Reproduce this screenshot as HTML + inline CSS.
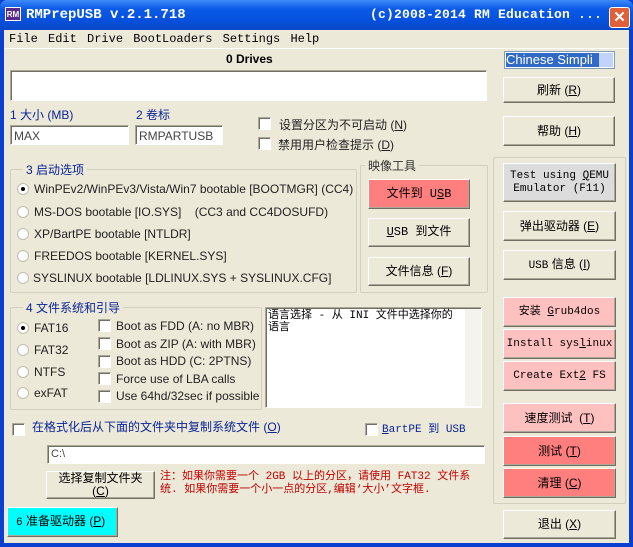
<!DOCTYPE html>
<html><head><meta charset="utf-8"><style>
*{box-sizing:border-box;margin:0;padding:0}
body{width:633px;height:547px;overflow:hidden;background:#0a3fd0;font-family:"Liberation Sans","Noto Sans CJK SC",sans-serif;font-size:11px;color:#000;position:relative}
.a{position:absolute}
#title{left:0;top:0;width:633px;height:30px;background:linear-gradient(#3d8af7,#0a5ae8 30%,#0550dc 70%,#0a48c8);border-radius:7px 7px 0 0}
#client{left:4px;top:30px;width:625px;height:513px;background:#ece9d8}
.tt{color:#fff;font-family:"Liberation Mono","Noto Sans CJK SC",monospace;font-weight:bold;font-size:14px;top:7px;white-space:nowrap}
.btn{position:absolute;background:#ece9d8;border:1px solid;border-color:#fff #716f64 #716f64 #fff;box-shadow:inset -1px -1px 0 #aca899;display:flex;align-items:center;justify-content:center;text-align:center;font-size:12px;font-family:"Liberation Sans","Noto Sans CJK SC",sans-serif;line-height:13px}
.btn>span{display:block;white-space:nowrap}
.mono{font-family:"Liberation Mono","Noto Sans CJK SC",monospace;font-size:11px}
.inp{position:absolute;background:#fff;border:1px solid;border-color:#aca899 #fff #fff #aca899;box-shadow:inset 1px 1px 0 #716f64;font-size:12px;color:#444;padding:3px 3px}
.grp{position:absolute;border:1px solid #d0d0bf;border-radius:2px}
.lg{position:absolute;background:#ece9d8;color:#0a2496;font-size:12px;padding:0 3px;top:-9px}
.cb{position:absolute;width:13px;height:13px;background:#fff;border:1px solid;border-color:#aca899 #fff #fff #aca899;box-shadow:inset 1px 1px 0 #716f64}
.rd{position:absolute;width:12px;height:12px;border-radius:50%;background:#fff;border:1px solid #c0bdb0}
.rd.on::after{content:"";position:absolute;left:3px;top:3px;width:4px;height:4px;border-radius:50%;background:#000}
.t{position:absolute;font-size:12px;white-space:nowrap;color:#222}
</style></head><body>
<div id="title" class="a"></div>
<div class="a" style="left:5px;top:7px;width:16px;height:14px;background:#5a2a8a;color:#fff;font-size:8px;font-weight:bold;text-align:center;line-height:14px;border:1px solid #fff">RM</div>
<div class="a tt" style="left:26px">RMPrepUSB v.2.1.718</div>
<div class="a tt" style="left:370px;font-size:13px;letter-spacing:0.2px">(c)2008-2014 RM Education ...</div>
<div class="a" style="left:609px;top:7px;width:21px;height:21px;background:#e0603a;border:1px solid #fff;border-radius:3px;color:#fff;font-size:15px;font-weight:bold;text-align:center;line-height:19px">✕</div>
<div id="client" class="a"></div>
<div class="a mono" style="left:9px;top:32px;font-size:12px;word-spacing:3px;white-space:nowrap">File Edit Drive BootLoaders Settings Help</div>
<div class="a" style="left:4px;top:48px;width:625px;border-top:1px solid #fff"></div>
<div class="a" style="left:226px;top:52px;font-weight:bold;font-size:12px">0 Drives</div>
<div class="inp" style="left:10px;top:70px;width:477px;height:31px"></div>
<div class="a" style="left:504px;top:51px;width:111px;height:18px;background:#fff;border:1px solid #7f9db9"><div style="position:absolute;left:1px;top:1px;width:93px;height:14px;background:#316ac5;color:#fff;font-size:13px;line-height:14px;overflow:hidden;white-space:nowrap">Chinese Simpli</div><div style="position:absolute;right:1px;top:1px;width:14px;height:14px;background:#c1d3fb"></div></div>
<div class="btn" style="left:503px;top:77px;width:112px;height:26px"><span>刷新 (<u>R</u>)</span></div>
<div class="btn" style="left:503px;top:116px;width:112px;height:30px"><span>帮助 (<u>H</u>)</span></div>
<div class="a" style="left:10px;top:106px;color:#0a2496;font-size:12px">1 大小 (MB)</div>
<div class="a" style="left:136px;top:106px;color:#0a2496;font-size:12px">2 卷标</div>
<div class="inp" style="left:10px;top:125px;width:119px;height:20px">MAX</div>
<div class="inp" style="left:135px;top:125px;width:88px;height:20px">RMPARTUSB</div>
<div class="cb" style="left:258px;top:117px"></div><div class="t" style="left:279px;top:116px">设置分区为不可启动 (<u>N</u>)</div>
<div class="cb" style="left:258px;top:137px"></div><div class="t" style="left:278px;top:136px">禁用用户检查提示 (<u>D</u>)</div>

<div class="grp" style="left:10px;top:169px;width:347px;height:124px"><div class="lg" style="left:12px">3 启动选项</div></div>
<div class="rd on" style="left:17px;top:183px"></div><div class="t" style="left:34px;top:182px">WinPEv2/WinPEv3/Vista/Win7 bootable [BOOTMGR] (CC4)</div>
<div class="rd" style="left:17px;top:206px"></div><div class="t" style="left:34px;top:205px">MS-DOS bootable [IO.SYS]&nbsp;&nbsp;&nbsp; (CC3 and CC4DOSUFD)</div>
<div class="rd" style="left:17px;top:228px"></div><div class="t" style="left:34px;top:227px">XP/BartPE bootable [NTLDR]</div>
<div class="rd" style="left:17px;top:250px"></div><div class="t" style="left:34px;top:249px">FREEDOS bootable [KERNEL.SYS]</div>
<div class="rd" style="left:17px;top:272px"></div><div class="t" style="left:33px;top:271px">SYSLINUX bootable [LDLINUX.SYS + SYSLINUX.CFG]</div>

<div class="grp" style="left:360px;top:165px;width:128px;height:128px"><div class="lg" style="left:4px;color:#333">映像工具</div></div>
<div class="btn mono" style="left:368px;top:179px;width:102px;height:30px;background:#ff7f7f;font-size:12px"><span>文件到 U<u>S</u>B</span></div>
<div class="btn mono" style="left:368px;top:218px;width:102px;height:29px;font-size:12px"><span><u>U</u>SB 到文件</span></div>
<div class="btn" style="left:368px;top:257px;width:102px;height:29px"><span>文件信息 (<u>F</u>)</span></div>

<div class="grp" style="left:493px;top:157px;width:133px;height:347px"></div>
<div class="btn mono" style="left:503px;top:163px;width:113px;height:39px;background:#dcdcdc"><span>Test using <u>Q</u>EMU<br>Emulator (F11)</span></div>
<div class="btn" style="left:503px;top:211px;width:113px;height:30px"><span>弹出驱动器 (<u>E</u>)</span></div>
<div class="btn" style="left:503px;top:250px;width:113px;height:30px"><span><span class="mono">USB</span> 信息 (<u>I</u>)</span></div>
<div class="btn mono" style="left:503px;top:297px;width:113px;height:30px;background:#ffc0c0"><span>安装 <u>G</u>rub4dos</span></div>
<div class="btn mono" style="left:503px;top:329px;width:113px;height:30px;background:#ffc0c0"><span>Install sys<u>l</u>inux</span></div>
<div class="btn mono" style="left:503px;top:361px;width:113px;height:30px;background:#ffc0c0"><span>Create Ext<u>2</u> FS</span></div>
<div class="btn" style="left:503px;top:403px;width:113px;height:30px;background:#ffc0c0"><span>速度测试 &nbsp;(<u>T</u>)</span></div>
<div class="btn" style="left:503px;top:436px;width:113px;height:30px;background:#ff7f7f"><span>测试 (<u>T</u>)</span></div>
<div class="btn" style="left:503px;top:468px;width:113px;height:30px;background:#ff7f7f"><span>清理 (<u>C</u>)</span></div>
<div class="btn" style="left:503px;top:510px;width:113px;height:29px"><span>退出 (<u>X</u>)</span></div>

<div class="grp" style="left:10px;top:307px;width:252px;height:103px"><div class="lg" style="left:12px">4 文件系统和引导</div></div>
<div class="rd on" style="left:17px;top:322px"></div><div class="t" style="left:34px;top:321px">FAT16</div>
<div class="rd" style="left:17px;top:344px"></div><div class="t" style="left:34px;top:343px">FAT32</div>
<div class="rd" style="left:17px;top:366px"></div><div class="t" style="left:34px;top:365px">NTFS</div>
<div class="rd" style="left:17px;top:387px"></div><div class="t" style="left:34px;top:386px">exFAT</div>
<div class="cb" style="left:98px;top:319px"></div><div class="t" style="left:116px;top:319px">Boot as FDD (A: no MBR)</div>
<div class="cb" style="left:98px;top:337px"></div><div class="t" style="left:116px;top:337px">Boot as ZIP (A: with MBR)</div>
<div class="cb" style="left:98px;top:355px"></div><div class="t" style="left:116px;top:354px">Boot as HDD (C: 2PTNS)</div>
<div class="cb" style="left:98px;top:372px"></div><div class="t" style="left:116px;top:372px">Force use of LBA calls</div>
<div class="cb" style="left:98px;top:390px"></div><div class="t" style="left:116px;top:389px">Use 64hd/32sec if possible</div>

<div class="inp mono" style="left:265px;top:307px;width:217px;height:101px;color:#000;padding:2px 2px;line-height:12px;font-size:11px">语言选择 - 从 INI 文件中选择你的<br>语言</div>
<div class="a" style="left:465px;top:309px;width:16px;height:97px;background:#f4f3ee"></div>

<div class="cb" style="left:12px;top:423px"></div><div class="t" style="left:32px;top:418px;color:#0a2496;font-size:12px">在格式化后从下面的文件夹中复制系统文件 (<u>O</u>)</div>
<div class="cb" style="left:365px;top:423px"></div><div class="t mono" style="left:382px;top:420px;color:#0a2496;font-size:11px"><u>B</u>artPE 到 USB</div>
<div class="inp" style="left:47px;top:445px;width:438px;height:19px;padding:2px 3px;font-size:11px">C:\</div>
<div class="btn" style="left:46px;top:471px;width:109px;height:28px;line-height:13px"><span>选择复制文件夹<br>(<u>C</u>)</span></div>
<div class="a mono" style="left:160px;top:471px;width:330px;color:#c00000;font-size:11px;line-height:13px;white-space:nowrap">注：如果你需要一个 2GB 以上的分区，请使用 FAT32 文件系<br>统. 如果你需要一个小一点的分区,编辑‘大小’文字框.</div>
<div class="btn" style="left:7px;top:507px;width:111px;height:30px;background:#00ffff;justify-content:flex-start;padding-left:8px"><span><span class="mono">6</span> 准备驱动器 (<u>P</u>)</span></div>
</body></html>
